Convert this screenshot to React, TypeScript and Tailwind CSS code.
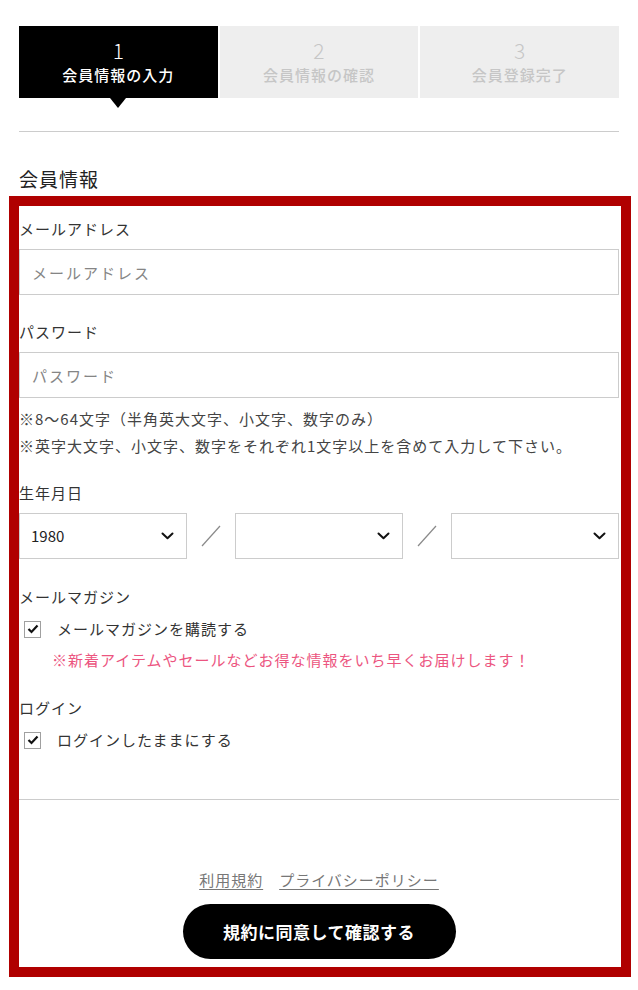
import React from 'react';

const FONT = '"Noto Sans CJK JP", "Noto Sans", sans-serif';

const STEPS = [
  { num: '1', label: '会員情報の入力', active: true },
  { num: '2', label: '会員情報の確認', active: false },
  { num: '3', label: '会員登録完了', active: false },
];

const Chevron = () => (
  <svg width="13" height="8" viewBox="0 0 13 8" className="pointer-events-none absolute right-[12px] top-1/2 -translate-y-1/2">
    <polyline points="1.5,1.5 6.5,6.2 11.5,1.5" fill="none" stroke="#111" strokeWidth="2" strokeLinecap="round" strokeLinejoin="round" />
  </svg>
);

const Slash = () => (
  <div className="flex w-[48px] shrink-0 items-center justify-center">
    <svg width="20" height="22" viewBox="0 0 20 22">
      <line x1="1" y1="21" x2="19" y2="1" stroke="#8a8a8a" strokeWidth="1.2" />
    </svg>
  </div>
);

const DateSelect = ({ value }: { value?: string }) => (
  <div className="relative h-[46px] flex-1 border border-[#cccccc] bg-white">
    <div className="flex h-full items-center pl-[11px] text-[15px] text-[#222]">{value}</div>
    <Chevron />
  </div>
);

const CheckRow = ({ label }: { label: string }) => (
  <label className="flex h-[24px] items-center">
    <span className="ml-[5px] flex h-[17px] w-[17px] items-center justify-center border border-[#a0a0a0] bg-white">
      <svg width="12" height="10" viewBox="0 0 12 10">
        <polyline points="1.5,5 4.5,8 10.5,1.5" fill="none" stroke="#111" strokeWidth="2.2" />
      </svg>
    </span>
    <span className="ml-[16px] text-[15px] tracking-[1px] text-[#333]">{label}</span>
  </label>
);

const FieldLabel = ({ children, className = '' }: { children: React.ReactNode; className?: string }) => (
  <div className={`h-[24px] text-[15px] leading-[24px] tracking-[1px] text-[#333] ${className}`}>{children}</div>
);

export default function App() {
  return (
    <div className="min-h-screen bg-white pb-[15px]" style={{ fontFamily: FONT }}>
      <div className="px-[19px] pt-[26px]">
        {/* steps */}
        <div className="grid grid-cols-3 gap-[2px]">
          {STEPS.map((s) => (
            <div
              key={s.num}
              className={`relative flex h-[72px] flex-col items-center justify-center ${s.active ? 'bg-black text-white' : 'bg-[#eeeeee] text-[#c6c6c6]'}`}
            >
              <div className="text-[21px] font-light leading-[26px]">{s.num}</div>
              <div className="text-[15px] font-medium leading-[24px] tracking-[1px]">{s.label}</div>
              {s.active && (
                <div className="absolute -bottom-[10px] left-1/2 h-0 w-0 -translate-x-1/2 border-x-[8px] border-t-[10px] border-x-transparent border-t-black" />
              )}
            </div>
          ))}
        </div>

        <div className="mt-[33px] h-px bg-[#cccccc]" />

        <h2 className="mt-[33px] text-[19px] leading-[28px] tracking-[1px] text-[#222]">会員情報</h2>
      </div>

      {/* highlighted form */}
      <div className="ml-[9px] mr-[7px] mt-[3px] border-[10px] border-[#b00000] bg-white">
        <div className="pr-[2px]">
          <FieldLabel className="mt-[11px]">メールアドレス</FieldLabel>
          <input
            type="text"
            placeholder="メールアドレス"
            className="mt-[8px] block h-[46px] w-full border border-[#cccccc] px-[12px] text-[15px] tracking-[2px] text-[#333] outline-none placeholder:text-[#858585]"
          />

          <FieldLabel className="mt-[25px]">パスワード</FieldLabel>
          <input
            type="password"
            placeholder="パスワード"
            className="mt-[8px] block h-[46px] w-full border border-[#cccccc] px-[12px] text-[15px] tracking-[2px] text-[#333] outline-none placeholder:text-[#858585]"
          />
          <div className="mt-[7px] text-[15px] leading-[27px] tracking-[1px] text-[#444]">
            <p>※8〜64文字（半角英大文字、小文字、数字のみ）</p>
            <p>※英字大文字、小文字、数字をそれぞれ1文字以上を含めて入力して下さい。</p>
          </div>

          <FieldLabel className="mt-[22px]">生年月日</FieldLabel>
          <div className="mt-[8px] flex">
            <DateSelect value="1980" />
            <Slash />
            <DateSelect />
            <Slash />
            <DateSelect />
          </div>

          <FieldLabel className="mt-[26px]">メールマガジン</FieldLabel>
          <div className="mt-[8px]">
            <CheckRow label="メールマガジンを購読する" />
          </div>
          <p className="mt-[7px] pl-[33px] text-[15px] leading-[24px] tracking-[1px] text-[#ec5580]">
            ※新着アイテムやセールなどお得な情報をいち早くお届けします！
          </p>

          <FieldLabel className="mt-[24px]">ログイン</FieldLabel>
          <div className="mt-[8px]">
            <CheckRow label="ログインしたままにする" />
          </div>

          <div className="mt-[47px] h-px bg-[#cccccc]" />

          <div className="mt-[68px] flex h-[24px] items-center justify-center gap-[16px] text-[15px] tracking-[1px] text-[#777]">
            <a className="underline underline-offset-[3px]">利用規約</a>
            <a className="underline underline-offset-[3px]">プライバシーポリシー</a>
          </div>

          <div className="mt-[12px] flex justify-center pb-[8px]">
            <button className="h-[55px] w-[273px] rounded-full bg-black text-[17px] font-bold tracking-[0.5px] text-white">
              規約に同意して確認する
            </button>
          </div>
        </div>
      </div>
    </div>
  );
}
